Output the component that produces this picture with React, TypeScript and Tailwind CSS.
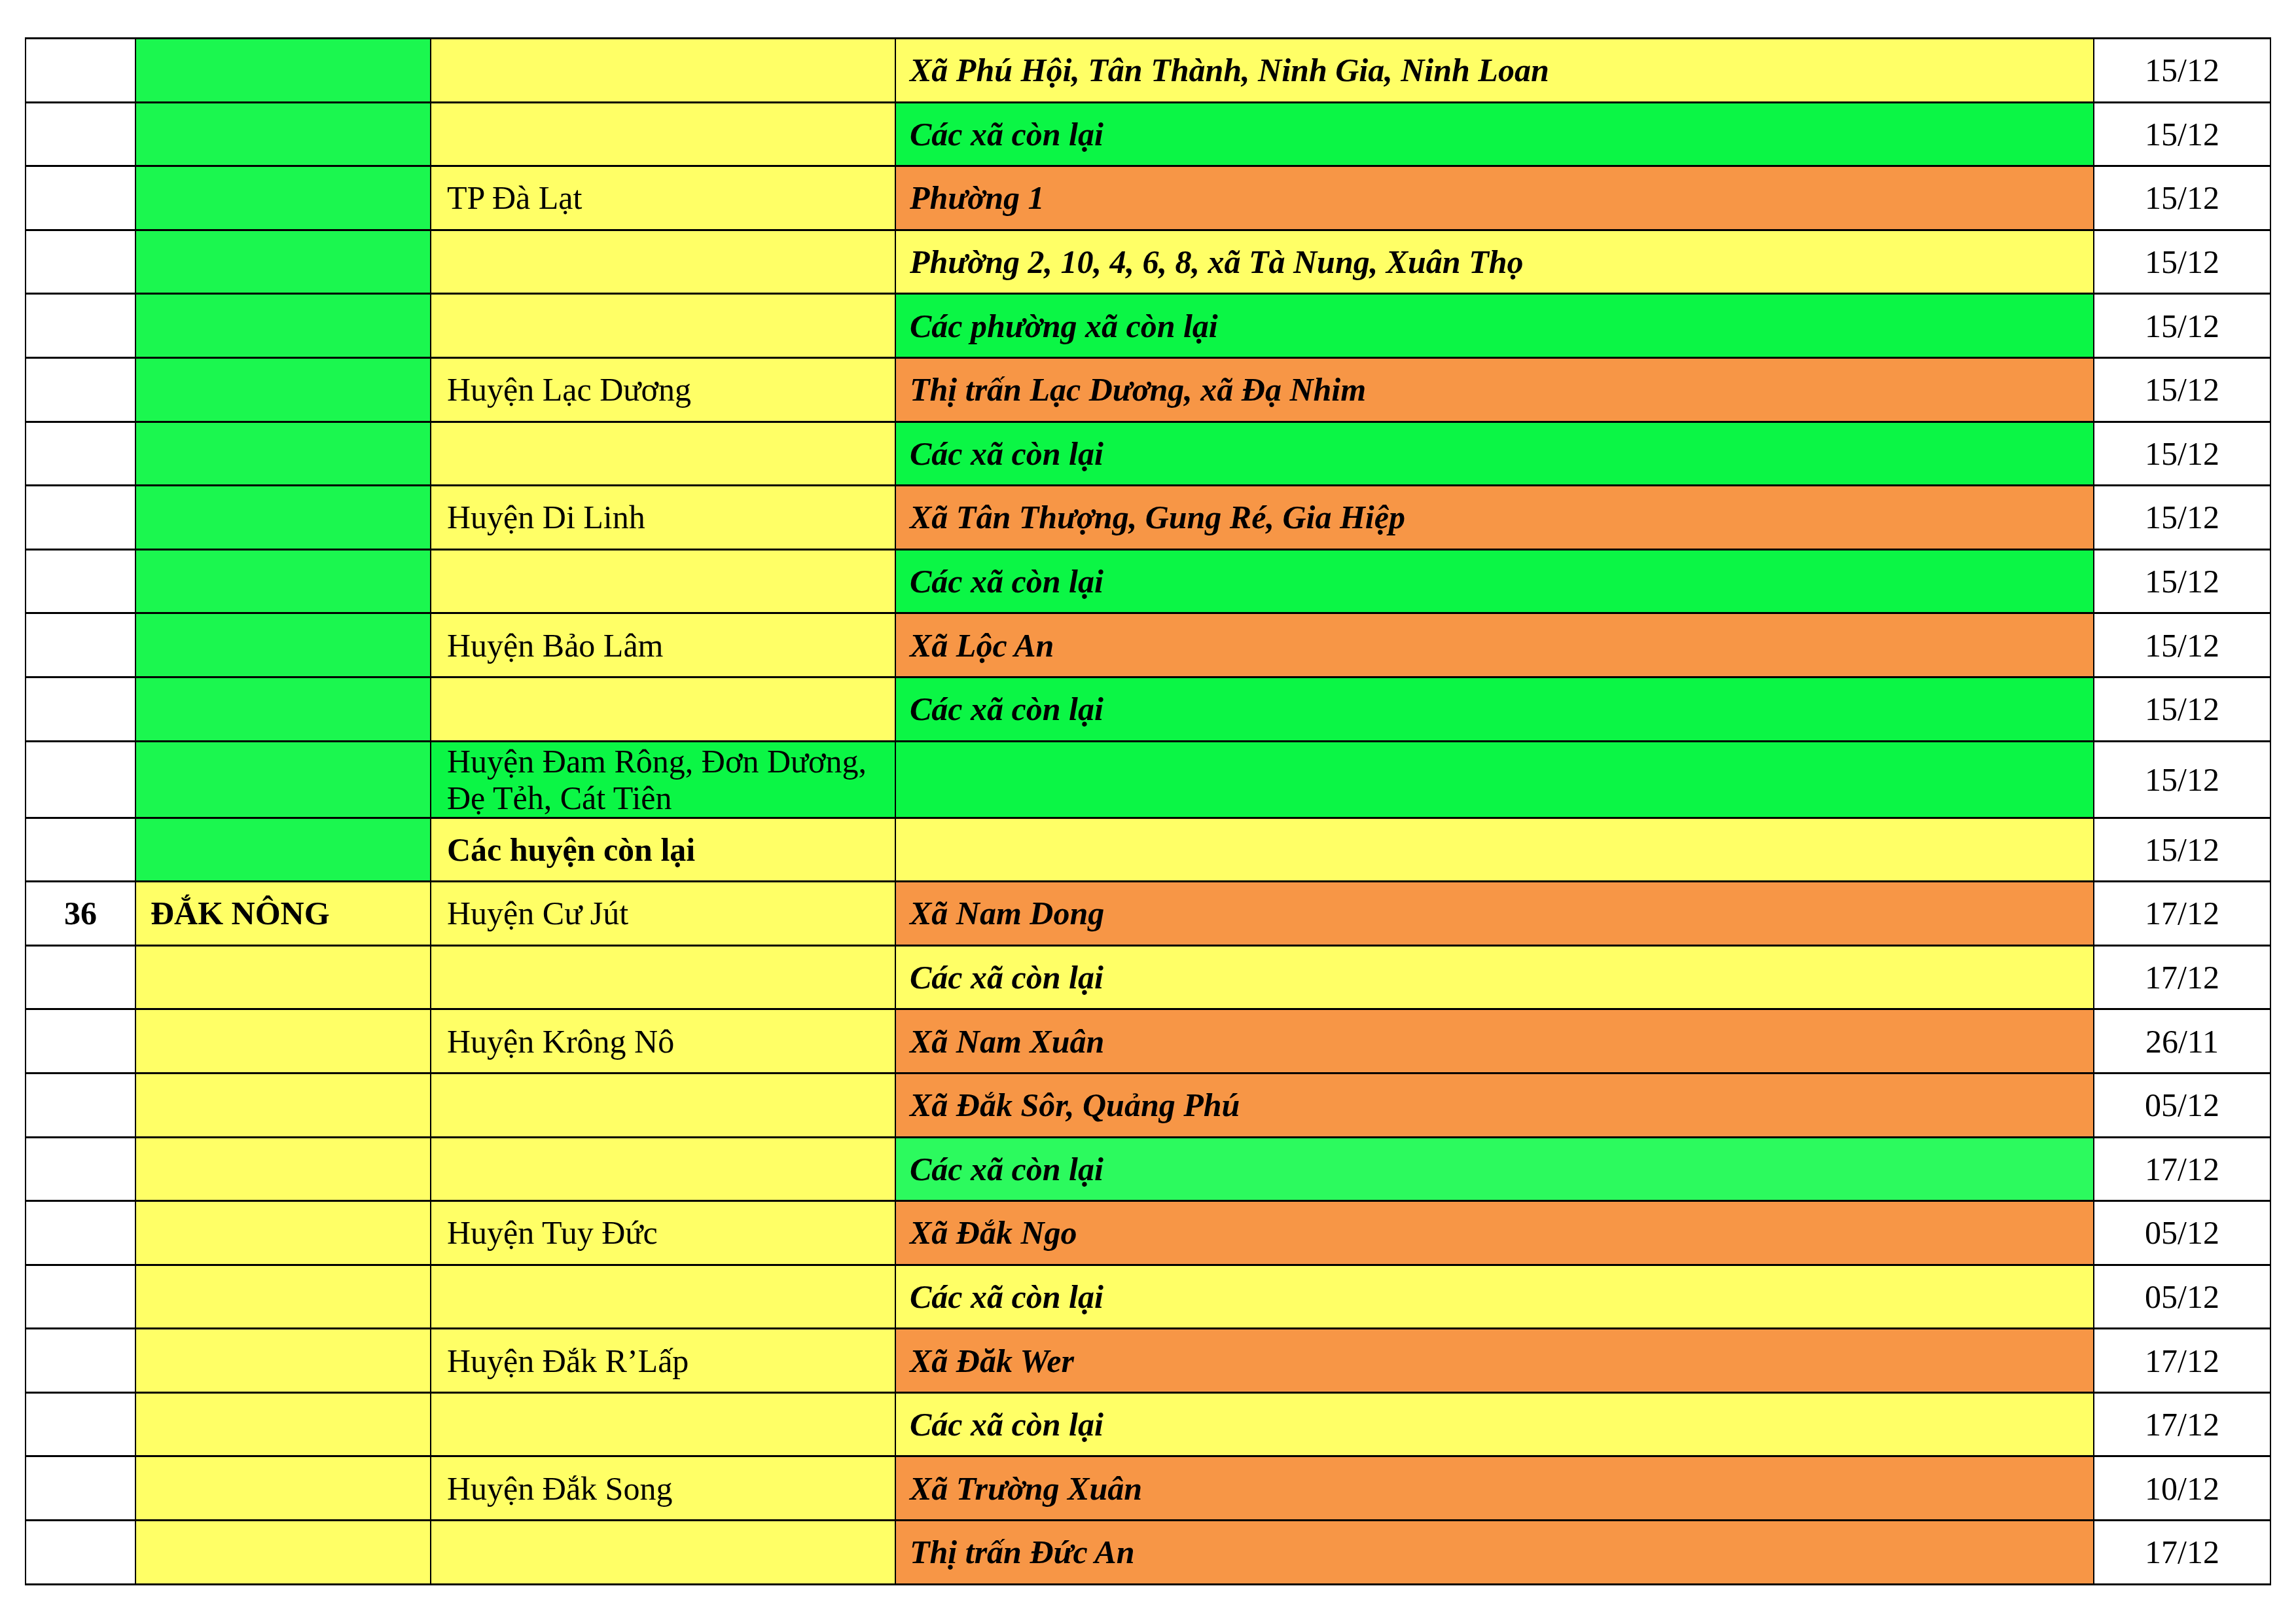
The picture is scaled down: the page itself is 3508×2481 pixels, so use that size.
const GREEN = "bg-[#1bf74f]";
const CGREEN = "bg-[#0bf645]";
const LGREEN = "bg-[#2cfa5e]";
const YELLOW = "bg-[#ffff66]";
const ORANGE = "bg-[#f79646]";

type Row = {
  no?: string;
  province?: string;
  provBg: string;
  district?: string;
  districtBold?: boolean;
  distBg: string;
  commune?: string;
  comBg: string;
  date: string;
  tall?: boolean;
};

const lamDong = (district: string, commune: string, comBg: string, distBg = YELLOW): Row => ({
  provBg: GREEN,
  district,
  distBg,
  commune,
  comBg,
  date: "15/12",
});

const dakNong = (district: string, commune: string, comBg: string, date: string): Row => ({
  provBg: YELLOW,
  district,
  distBg: YELLOW,
  commune,
  comBg,
  date,
});

const rows: Row[] = [
  lamDong("", "Xã Phú Hội, Tân Thành, Ninh Gia, Ninh Loan", YELLOW),
  lamDong("", "Các xã còn lại", CGREEN),
  lamDong("TP Đà Lạt", "Phường 1", ORANGE),
  lamDong("", "Phường 2, 10, 4, 6, 8, xã Tà Nung, Xuân Thọ", YELLOW),
  lamDong("", "Các phường xã còn lại", CGREEN),
  lamDong("Huyện Lạc Dương", "Thị trấn Lạc Dương, xã Đạ Nhim", ORANGE),
  lamDong("", "Các xã còn lại", CGREEN),
  lamDong("Huyện Di Linh", "Xã Tân Thượng, Gung Ré, Gia Hiệp", ORANGE),
  lamDong("", "Các xã còn lại", CGREEN),
  lamDong("Huyện Bảo Lâm", "Xã Lộc An", ORANGE),
  lamDong("", "Các xã còn lại", CGREEN),
  { ...lamDong("Huyện Đam Rông, Đơn Dương, Đẹ Tẻh, Cát Tiên", "", CGREEN, CGREEN), tall: true },
  { ...lamDong("Các huyện còn lại", "", YELLOW), districtBold: true },
  { ...dakNong("Huyện Cư Jút", "Xã Nam Dong", ORANGE, "17/12"), no: "36", province: "ĐẮK NÔNG" },
  dakNong("", "Các xã còn lại", YELLOW, "17/12"),
  dakNong("Huyện Krông Nô", "Xã Nam Xuân", ORANGE, "26/11"),
  dakNong("", "Xã Đắk Sôr, Quảng Phú", ORANGE, "05/12"),
  dakNong("", "Các xã còn lại", LGREEN, "17/12"),
  dakNong("Huyện Tuy Đức", "Xã Đắk Ngo", ORANGE, "05/12"),
  dakNong("", "Các xã còn lại", YELLOW, "05/12"),
  dakNong("Huyện Đắk R’Lấp", "Xã Đăk Wer", ORANGE, "17/12"),
  dakNong("", "Các xã còn lại", YELLOW, "17/12"),
  dakNong("Huyện Đắk Song", "Xã Trường Xuân", ORANGE, "10/12"),
  dakNong("", "Thị trấn Đức An", ORANGE, "17/12"),
];

function App() {
  return (
    <div className="w-[3508px] h-[2481px] bg-white pt-[57px] pl-[38px] font-['Liberation_Serif','Times_New_Roman',serif] text-[50px] leading-[56px] text-black">
      <div className="grid w-max grid-cols-[166px_449px_708px_1829px_268px] gap-x-[2px] gap-y-[3px] bg-black px-[2px] py-[3px]">
        {rows.map((r, i) => {
          const h = r.tall ? "h-[114px]" : "h-[94.6px]";
          return (
            <div key={i} className="contents">
              <div className={`${h} bg-white flex items-center justify-center font-bold`}>{r.no}</div>
              <div className={`${h} ${r.provBg} flex items-center pl-[22px] font-bold`}>{r.province}</div>
              <div className={`${h} ${r.distBg} flex items-center pl-[24px] pr-[10px] ${r.districtBold ? "font-bold" : ""}`}>
                {r.district}
              </div>
              <div className={`${h} ${r.comBg} flex items-center pl-[21px] font-bold italic`}>{r.commune}</div>
              <div className={`${h} bg-white flex items-center justify-center`}>{r.date}</div>
            </div>
          );
        })}
      </div>
    </div>
  );
}

export default App;
